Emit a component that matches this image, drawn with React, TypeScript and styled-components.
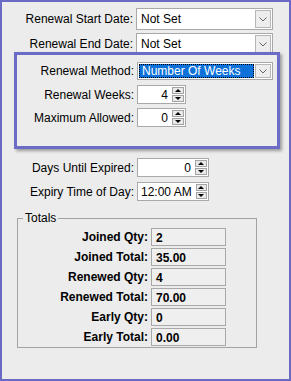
import React from "react";
import styled, { createGlobalStyle } from "styled-components";

const Global = createGlobalStyle`
  html, body { margin: 0; padding: 0; background: #ececec; }
  body { font-family: "Liberation Sans", Arial, sans-serif; font-size: 12px; color: #000; }
  * { box-sizing: border-box; }
`;

const Frame = styled.div`
  position: relative;
  width: 291px;
  height: 381px;
  border: 2px solid #6a6ac4;
  background: #ececec;
  display: flex;
  flex-direction: column;
`;

const Row = styled.div<{ $mt: number; $h: number }>`
  display: flex;
  align-items: center;
  margin-top: ${(p) => p.$mt}px;
  height: ${(p) => p.$h}px;
`;

const Label = styled.div<{ $w: number; $bold?: boolean }>`
  width: ${(p) => p.$w}px;
  text-align: right;
  white-space: nowrap;
  font-weight: ${(p) => (p.$bold ? 700 : 400)};
  margin-right: 3px;
  line-height: 14px;
`;

const Combo = styled.div<{ $w: number }>`
  width: ${(p) => p.$w}px;
  height: 100%;
  background: #fff;
  border: 1px solid #a9a9a9;
  display: flex;
  align-items: center;
  padding: 1px;
`;

const ComboText = styled.div<{ $selected?: boolean }>`
  flex: 1;
  height: 100%;
  display: flex;
  align-items: center;
  padding-left: 3px;
  white-space: nowrap;
  background: ${(p) => (p.$selected ? "#0d71d9" : "transparent")};
  color: ${(p) => (p.$selected ? "#fff" : "#000")};
  outline: ${(p) => (p.$selected ? "1px dotted #000" : "none")};
  outline-offset: -1px;
  font-size: 12px;
`;

const DropBtn = styled.div`
  width: 16px;
  height: 100%;
  margin-left: 1px;
  background: #ededed;
  border: 1px solid #b7b7b7;
  display: flex;
  align-items: center;
  justify-content: center;
`;

const Spinner = styled.div<{ $w: number }>`
  width: ${(p) => p.$w}px;
  height: 100%;
  background: #fff;
  border: 1px solid #a9a9a9;
  display: flex;
  align-items: stretch;
`;

const SpinText = styled.div<{ $align?: string }>`
  flex: 1;
  display: flex;
  align-items: center;
  justify-content: ${(p) => (p.$align === "left" ? "flex-start" : "flex-end")};
  padding: 0 4px 0 3px;
  white-space: nowrap;
`;

const SpinBtns = styled.div`
  width: 13px;
  display: flex;
  flex-direction: column;
  justify-content: center;
  gap: 1px;
  padding: 1px 1px 1px 0;
`;

const SpinBtn = styled.div`
  flex: 1;
  background: #e9e9e9;
  border: 1px solid #a3a3a3;
  display: flex;
  align-items: center;
  justify-content: center;
`;

const Highlight = styled.div`
  position: absolute;
  left: 12px;
  top: 50px;
  width: 266px;
  height: 97px;
  border: 3px solid #6c6cc6;
  box-shadow: 2px 2px 3px rgba(0, 0, 0, 0.35);
  pointer-events: none;
`;

const Group = styled.fieldset`
  margin: 10px 0 0 15px;
  width: 240px;
  padding: 3px 0 1px 0;
  border: 1px solid #a2a2a2;
  display: flex;
  flex-direction: column;
  gap: 2px;
`;

const Legend = styled.legend`
  margin-left: 5px;
  padding: 0 2px;
  line-height: 14px;
  font-size: 12px;
`;

const TotalRow = styled.div`
  display: flex;
  align-items: center;
  height: 18px;
`;

const TotalValue = styled.div`
  width: 75px;
  height: 100%;
  background: #efefef;
  border: 1px solid #a8a8a8;
  font-weight: 700;
  padding-left: 4px;
  display: flex;
  align-items: center;
  padding-top: 2px;
`;

const Chevron = () => (
  <svg width="8" height="5" viewBox="0 0 8 5">
    <path d="M0.5 0.5 L4 4 L7.5 0.5" fill="none" stroke="#666" strokeWidth="1" />
  </svg>
);

const Up = () => (
  <svg width="6" height="3" viewBox="0 0 6 3">
    <path d="M0 3 L3 0 L6 3 Z" fill="#000" />
  </svg>
);
const Down = () => (
  <svg width="6" height="3" viewBox="0 0 6 3">
    <path d="M0 0 L3 3 L6 0 Z" fill="#000" />
  </svg>
);

const ComboField = ({ w, text, selected }: { w: number; text: string; selected?: boolean }) => (
  <Combo $w={w}>
    <ComboText $selected={selected}>{text}</ComboText>
    <DropBtn>
      <Chevron />
    </DropBtn>
  </Combo>
);

const SpinField = ({ w, value, align }: { w: number; value: string; align?: string }) => (
  <Spinner $w={w}>
    <SpinText $align={align}>{value}</SpinText>
    <SpinBtns>
      <SpinBtn>
        <Up />
      </SpinBtn>
      <SpinBtn>
        <Down />
      </SpinBtn>
    </SpinBtns>
  </Spinner>
);

const totals: [string, string][] = [
  ["Joined Qty:", "2"],
  ["Joined Total:", "35.00"],
  ["Renewed Qty:", "4"],
  ["Renewed Total:", "70.00"],
  ["Early Qty:", "0"],
  ["Early Total:", "0.00"],
];

export default function App() {
  return (
    <>
      <Global />
      <Frame>
        <Row $mt={6} $h={22}>
          <Label $w={131}>Renewal Start Date:</Label>
          <ComboField w={137} text="Not Set" />
        </Row>
        <Row $mt={3} $h={22}>
          <Label $w={131}>Renewal End Date:</Label>
          <ComboField w={137} text="Not Set" />
        </Row>
        <Row $mt={7} $h={18}>
          <Label $w={132}>Renewal Method:</Label>
          <ComboField w={136} text="Number Of Weeks" selected />
        </Row>
        <Row $mt={5} $h={19}>
          <Label $w={132}>Renewal Weeks:</Label>
          <SpinField w={49} value="4" />
        </Row>
        <Row $mt={4} $h={19}>
          <Label $w={132}>Maximum Allowed:</Label>
          <SpinField w={49} value="0" />
        </Row>
        <Row $mt={31} $h={19}>
          <Label $w={132}>Days Until Expired:</Label>
          <SpinField w={72} value="0" />
        </Row>
        <Row $mt={5} $h={19}>
          <Label $w={132}>Expiry Time of Day:</Label>
          <SpinField w={72} value="12:00 AM" align="left" />
        </Row>
        <Group>
          <Legend>Totals</Legend>
          {totals.map(([l, v]) => (
            <TotalRow key={l}>
              <Label $w={130} $bold>
                {l}
              </Label>
              <TotalValue>{v}</TotalValue>
            </TotalRow>
          ))}
        </Group>
        <Highlight />
      </Frame>
    </>
  );
}
